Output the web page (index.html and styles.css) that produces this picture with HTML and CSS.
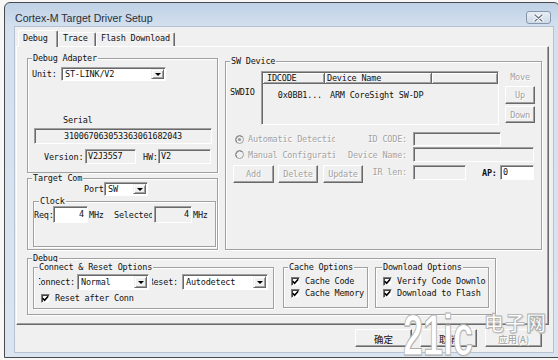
FILE: index.html
```html
<!DOCTYPE html>
<html>
<head>
<meta charset="utf-8">
<link rel="stylesheet" href="styles.css">
</head>
<body>
<div class="screen">
  <div class="window">
    <div class="titlebar">
      <span class="title">Cortex-M Target Driver Setup</span>
      <span class="close"><svg width="11" height="8" viewBox="0 0 11 8"><path d="M2 1 L9 7 M9 1 L2 7" stroke="#fff" stroke-width="3.2" stroke-linecap="round"/><path d="M2 1 L9 7 M9 1 L2 7" stroke="#6a7686" stroke-width="1.4" stroke-linecap="round"/></svg></span>
    </div>
    <div class="client">
      <div class="tabs">
        <div class="tab sel t-debug">Debug</div>
        <div class="tab t-trace">Trace</div>
        <div class="tab t-flash">Flash Download</div>
      </div>
      <div class="page">
        <div class="leftcol">
          <div class="grp g-da">
            <div class="lg">Debug Adapter</div>
            <div class="row r-unit"><span class="l-unit">Unit:</span><div class="combo c-unit"><span class="cv">ST-LINK/V2</span><span class="dd"><i class="tri"></i></span></div></div>
            <div class="serial-lbl">Serial</div>
            <div class="fld ro serial">310067063053363061682043</div>
            <div class="row r-ver"><span class="l-ver">Version:</span><div class="fld ro f-ver">V2J35S7</div><span class="l-hw">HW:</span><div class="fld ro f-hw">V2</div></div>
          </div>
          <div class="grp g-tc">
            <div class="lg">Target Com</div>
            <div class="row r-port"><span class="l-port">Port</span><div class="combo c-port"><span class="cv">SW</span><span class="dd"><i class="tri"></i></span></div></div>
            <div class="grp g-clk">
              <div class="lg lg-clk">Clock</div>
              <div class="row r-req">
                <span class="l-req">Req:</span><div class="fld f-req">4</div><span class="mhz">MHz</span><span class="l-sel">Selected:</span><div class="fld ro f-sel">4</div><span class="mhz2">MHz</span>
              </div>
            </div>
          </div>
        </div>
        <div class="grp g-sw">
          <div class="lg">SW Device</div>
          <div class="sw-top">
            <span class="swdio">SWDIO</span>
            <div class="list">
              <div class="lhead"><span class="h1">IDCODE</span><span class="h2">Device Name</span><span class="h3"></span></div>
              <div class="lrow"><span class="c1">0x0BB1...</span><span class="c2">ARM CoreSight SW-DP</span></div>
            </div>
            <div class="movecol"><span class="dis mv">Move</span><span class="btn dis b-up">Up</span><span class="btn dis b-down">Down</span></div>
          </div>
          <div class="row r-auto">
            <svg class="radio" width="9" height="9" viewBox="0 0 9 9"><circle cx="4.5" cy="4.5" r="4" fill="#f0f0f0" stroke="#a0a0a0"/><path d="M1.7 7.3 A4 4 0 0 1 7.3 1.7" fill="none" stroke="#808080"/><circle cx="4.5" cy="4.5" r="1.6" fill="#9a9a9a"/></svg>
            <span class="rl dis">Automatic Detection</span>
            <span class="rl2 dis">ID CODE:</span>
            <div class="fld ro f-id"></div>
          </div>
          <div class="row r-man">
            <svg class="radio" width="9" height="9" viewBox="0 0 9 9"><circle cx="4.5" cy="4.5" r="4" fill="#f0f0f0" stroke="#a0a0a0"/><path d="M1.7 7.3 A4 4 0 0 1 7.3 1.7" fill="none" stroke="#808080"/></svg>
            <span class="rl dis">Manual Configuration</span>
            <span class="rl2 dis">Device Name:</span>
            <div class="fld ro f-dn"></div>
          </div>
          <div class="row r-btns">
            <span class="btn dis b-add">Add</span>
            <span class="btn dis b-del">Delete</span>
            <span class="btn dis b-upd">Update</span>
            <span class="l-ir dis">IR len:</span>
            <div class="fld ro f-ir"></div>
            <span class="l-ap">AP:</span>
            <div class="fld f-ap">0</div>
          </div>
        </div>
        <div class="grp g-dbg">
          <div class="lg">Debug</div>
          <div class="dbg-row">
            <div class="grp g-cro">
              <div class="lg">Connect &amp; Reset Options</div>
              <div class="row r-conn">
                <span class="clip l-conn"><span>Connect:</span></span>
                <div class="combo c-conn"><span class="cv">Normal</span><span class="dd"><i class="tri"></i></span></div>
                <span class="clip l-rst"><span>Reset:</span></span>
                <div class="combo c-rst"><span class="cv">Autodetect</span><span class="dd"><i class="tri"></i></span></div>
              </div>
              <div class="row r-rac">
                <span class="chk"><svg width="7" height="7" viewBox="0 0 7 7"><path d="M0.8 3.2 L2.6 5.2 L6.2 1.2" fill="none" stroke="#000" stroke-width="1.6"/></svg></span><span class="cl">Reset after Conn</span>
              </div>
            </div>
            <div class="grp g-cache">
              <div class="lg">Cache Options</div>
              <div class="cks">
                <div class="ck"><span class="chk"><svg width="7" height="7" viewBox="0 0 7 7"><path d="M0.8 3.2 L2.6 5.2 L6.2 1.2" fill="none" stroke="#000" stroke-width="1.6"/></svg></span><span class="cl">Cache Code</span></div>
                <div class="ck"><span class="chk"><svg width="7" height="7" viewBox="0 0 7 7"><path d="M0.8 3.2 L2.6 5.2 L6.2 1.2" fill="none" stroke="#000" stroke-width="1.6"/></svg></span><span class="cl">Cache Memory</span></div>
              </div>
            </div>
            <div class="grp g-dl">
              <div class="lg lg-dl">Download Options</div>
              <div class="cks">
                <div class="ck"><span class="chk"><svg width="7" height="7" viewBox="0 0 7 7"><path d="M0.8 3.2 L2.6 5.2 L6.2 1.2" fill="none" stroke="#000" stroke-width="1.6"/></svg></span><span class="cl cl-clip">Verify Code Download</span></div>
                <div class="ck"><span class="chk"><svg width="7" height="7" viewBox="0 0 7 7"><path d="M0.8 3.2 L2.6 5.2 L6.2 1.2" fill="none" stroke="#000" stroke-width="1.6"/></svg></span><span class="cl">Download to Flash</span></div>
              </div>
            </div>
          </div>
        </div>
      </div>
      <div class="btnrow">
        <span class="btn pb">确定</span>
        <span class="btn pb">取消</span>
        <span class="btn pb pdis">应用(A)</span>
      </div>
    </div>
  </div>
  <div class="wm wm-21">21ic</div>
  <div class="wm wm-cn">电子网</div>
</div>
</body>
</html>
```

FILE: styles.css
```css
* { box-sizing: border-box; }
html, body { margin: 0; padding: 0; }
body {
  width: 558px; height: 360px; overflow: hidden;
  background: #f7f7f7;
  font-family: "DejaVu Sans Mono", monospace;
  font-size: 8.5px; letter-spacing: -0.2px; color: #111;
}
.screen { position: relative; width: 558px; height: 360px; padding: 2px 0 0 4px; }
.window {
  width: 556px; height: 356px;
  border: 1px solid #4a4a4a; border-radius: 6px 6px 0 0;
  background: linear-gradient(#bfd1e6, #d4e0ee 24px, #dae5f1);
  padding: 0 5px 0 9px;
}
.titlebar { height: 23px; display: flex; justify-content: space-between; align-items: flex-start; }
.title { margin: 9px 0 0 1px; font: 10.6px/12px "Liberation Sans", sans-serif; letter-spacing: 0; color: #2a2f38; }
.close {
  margin: 8px 3px 0 0; width: 25px; height: 13px;
  border: 1px solid #8797ab; border-radius: 3px;
  background: linear-gradient(#e6edf5, #cfdae7);
  display: flex; align-items: center; justify-content: center;
}
.client { width: 540px; height: 327px; border: 1px solid #b4c2d2; background: #f0f0f0; }

/* tabs */
.tabs { display: flex; align-items: flex-end; height: 19px; padding-left: 3px; }
.tab {
  position: relative; height: 14px; padding: 0 0 2px 4px; line-height: 11px;
  border-top: 1px solid #fff; border-left: 1px solid #fff; border-right: 1px solid #696969;
  border-radius: 2px 2px 0 0; background: #f0f0f0;
  box-shadow: inset -1px 0 #a0a0a0; white-space: nowrap;
}
.tab.sel { height: 17px; padding-top: 2px; padding-bottom: 3px; margin-bottom: -1px; z-index: 1; }
.t-debug { width: 40px; }
.t-trace { width: 38px; }
.t-flash { width: 79px; }

.page {
  margin-left: 1px; width: 533px; height: 279px;
  border: 1px solid; border-color: #fff #696969 #696969 #fff;
  box-shadow: inset -1px -1px #a0a0a0;
  padding: 11px 0 0 10px;
  display: grid; grid-template-columns: 191px 317px; column-gap: 7px;
  align-items: start; align-content: start;
}

/* group boxes */
.grp { border: 1px solid #a0a0a0; box-shadow: 1px 1px 0 #fff, inset 1px 1px 0 #fff; }
.lg {
  width: fit-content; height: 10px; line-height: 10px;
  margin: -6px 0 0 4px; padding: 0 1px; background: #f0f0f0; white-space: nowrap;
}
.row { display: flex; align-items: center; }

/* common controls */
.fld {
  border: 1px solid; border-color: #a0a0a0 #fff #fff #a0a0a0;
  box-shadow: inset 1px 1px #696969; background: #fff;
  white-space: nowrap; overflow: hidden;
}
.fld.ro { background: #f0f0f0; }
.combo {
  display: flex; height: 100%; padding: 1px; background: #fff;
  border: 1px solid; border-color: #a0a0a0 #fff #fff #a0a0a0;
  box-shadow: inset 1px 1px #696969;
}
.cv { flex: 1; padding-left: 2px; line-height: 10px; white-space: nowrap; overflow: hidden; align-self: center; }
.dd {
  width: 13px; height: 100%; background: #f0f0f0;
  border: 1px solid; border-color: #f0f0f0 #696969 #696969 #f0f0f0;
  box-shadow: inset 1px 1px #fff, inset -1px -1px #a0a0a0;
  display: flex; align-items: center; justify-content: center;
}
.tri { display: block; width: 0; height: 0; border-left: 3px solid transparent; border-right: 3px solid transparent; border-top: 3px solid #000; }
.btn {
  display: flex; align-items: center; justify-content: center;
  background: #f0f0f0; border: 1px solid; border-color: #fff #696969 #696969 #fff;
  box-shadow: inset -1px -1px #a0a0a0; white-space: nowrap;
}
.dis { color: #a3a3a3; text-shadow: 1px 1px 0 #fff; }
.chk {
  width: 9px; height: 9px; flex: none;
  border: 1px solid; border-color: #7a7a7a #f4f4f4 #f4f4f4 #7a7a7a;
  box-shadow: inset 1px 1px #444; background: #fff;
  display: flex; align-items: center; justify-content: center;
}
.chk svg { display: block; }
.cl { margin-left: 5px; white-space: nowrap; line-height: 9px; }
.clip { display: flex; justify-content: flex-end; overflow: hidden; white-space: nowrap; }
.clip span { flex: none; }

/* debug adapter */
.g-da { height: 115px; }
.r-unit { margin: 4px 0 0 4px; height: 14px; }
.l-unit { width: 29px; }
.c-unit { width: 105px; }
.serial-lbl { margin: 33px 0 0 35px; height: 12px; line-height: 12px; }
.serial { margin: 2px 0 0 6px; width: 178px; height: 16px; line-height: 14px; text-align: center; }
.r-ver { margin: 5px 0 0 16px; height: 15px; }
.l-ver { width: 41px; }
.f-ver { width: 51px; height: 15px; line-height: 13px; padding-left: 2px; }
.l-hw { margin-left: 7px; width: 15px; }
.f-hw { width: 53px; height: 15px; line-height: 13px; padding-left: 2px; }

/* target com */
.g-tc { margin-top: 5px; height: 72px; }
.r-port { margin: -1px 0 0 56px; height: 14px; }
.l-port { width: 20px; }
.c-port { width: 44px; }
.g-clk { margin: 5px 1px 0 5px; height: 46px; }
.lg-clk { margin-left: 5px; }
.r-req { height: 17px; }
.l-req { width: 19px; }
.f-req { width: 35px; height: 17px; line-height: 15px; text-align: right; padding-right: 3px; }
.mhz { margin-left: 1px; width: 15px; }
.l-sel { margin-left: 10px; width: 38px; overflow: hidden; white-space: nowrap; }
.f-sel { margin-left: 2px; width: 38px; height: 17px; line-height: 15px; text-align: right; padding-right: 2px; }
.mhz2 { margin-left: 1px; }

/* sw device */
.g-sw { margin-top: 3px; height: 189px; }
.sw-top { display: flex; margin-top: 5px; height: 54px; }
.swdio { width: 35px; padding-left: 4px; margin-top: 15px; height: 12px; line-height: 12px; }
.list {
  width: 238px; height: 54px;
  border: 1px solid; border-color: #a0a0a0 #fff #fff #a0a0a0;
  box-shadow: inset 1px 1px #696969; background: #f0f0f0;
  padding: 0 0 0 1px;
}
.lhead { display: flex; height: 11px; line-height: 10px; margin-top: 1px; }
.lhead span {
  border-right: 1px solid #696969; border-bottom: 1px solid #696969;
  box-shadow: inset 1px 1px #fff, inset -1px -1px #a0a0a0;
  padding-left: 4px; white-space: nowrap;
}
.lhead .h1 { width: 62px; }
.lhead .h2 { width: 107px; padding-left: 2px; }
.lhead .h3 { flex: 1; }
.lrow { display: flex; margin-top: 5px; line-height: 12px; white-space: nowrap; }
.c1 { width: 62px; text-align: right; padding-right: 3px; }
.c2 { padding-left: 5px; }
.movecol { margin-left: 6px; width: 30px; display: flex; flex-direction: column; }
.mv { text-align: center; height: 10px; line-height: 10px; margin-top: 1px; }
.b-up { margin-top: 4px; height: 18px; }
.b-down { margin-top: 2px; height: 17px; }
.r-auto { margin-top: 7px; height: 14px; }
.r-man { margin-top: 1px; height: 15px; }
.radio { margin-left: 9px; flex: none; display: block; }
.rl { margin-left: 4px; width: 87px; overflow: hidden; white-space: nowrap; }
.rl2 { width: 72px; text-align: right; white-space: nowrap; }
.f-id { margin-left: 6px; width: 88px; height: 14px; }
.f-dn { margin-left: 6px; width: 121px; height: 15px; }
.r-btns { margin-top: 3px; height: 18px; align-items: flex-start; }
.b-add { margin-left: 7px; width: 41px; height: 18px; }
.b-del { margin-left: 4px; width: 40px; height: 18px; }
.b-upd { margin-left: 5px; width: 40px; height: 18px; }
.l-ir { width: 44px; text-align: right; line-height: 15px; white-space: nowrap; }
.f-ir { margin-left: 6px; width: 53px; height: 15px; }
.l-ap { margin-left: 16px; width: 15px; font-weight: bold; line-height: 17px; }
.f-ap { margin-left: 3px; width: 34px; height: 15px; line-height: 13px; padding-left: 2px; }

/* debug group */
.g-dbg { grid-column: 1 / -1; margin-top: 8px; width: 469px; height: 57px; }
.dbg-row { display: flex; align-items: flex-start; margin: 4px 0 0 5px; }
.g-cro { width: 241px; height: 42px; }
.g-cache { margin-left: 9px; width: 85px; height: 41px; }
.g-dl { margin-left: 7px; width: 114px; height: 41px; }
.lg-dl { margin-left: 6px; }
.r-conn { margin: 2px 0 0 3px; height: 16px; }
.l-conn { margin-left: 2px; width: 36px; }
.c-conn { margin-left: 2px; width: 72px; }
.l-rst { margin-left: 3px; width: 26px; }
.c-rst { margin-left: 4px; width: 86px; }
.r-rac { margin: 3px 0 0 7px; height: 10px; }
.cks { margin: 5px 0 0 7px; display: flex; flex-direction: column; gap: 3px; }
.ck { display: flex; align-items: center; height: 9px; }
.cl-clip { width: 89px; overflow: hidden; }

/* bottom buttons */
.btnrow { display: flex; justify-content: flex-end; gap: 8px; margin-top: 4px; padding-right: 11px; }
.pb {
  width: 57px; height: 18px; padding-top: 2px;
  font: 9.5px/12px "Noto Sans CJK SC", "Noto Sans", sans-serif; letter-spacing: 0; color: #111;
}
.pdis { color: #a0a0a0; text-shadow: 1px 1px 0 #fff; }

/* watermark overlay */
.wm { position: absolute; color: #fff; white-space: nowrap; pointer-events: none; }
.wm-21 {
  left: 403px; top: 306px;
  font: bold 58px/58px "Liberation Sans", sans-serif; letter-spacing: 0;
  -webkit-text-stroke: 1px #adadad;
  text-shadow: 1px 1px 1px #c8c8c8;
  transform: scaleX(0.62); transform-origin: left top;
}
.wm-cn {
  left: 484px; top: 313px;
  font: bold 20px/20px "Noto Sans CJK SC", sans-serif; letter-spacing: 1px;
  -webkit-text-stroke: 0.8px #adadad;
  text-shadow: 1px 1px 1px #c8c8c8;
}
```
